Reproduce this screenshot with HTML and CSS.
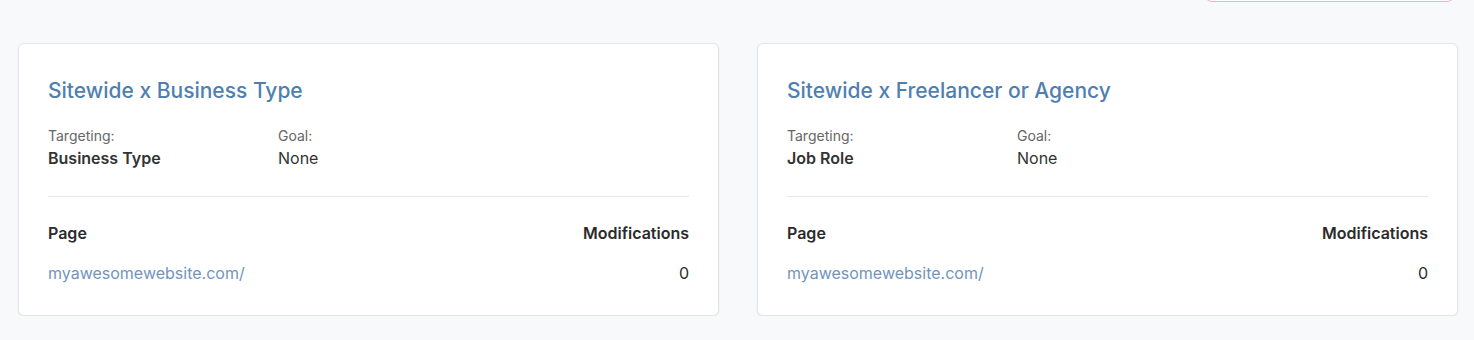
FILE: index.html
```html
<!DOCTYPE html>
<html lang="en">
<head>
  <meta charset="UTF-8" />
  <title>Experiments</title>
  <link rel="stylesheet" href="styles.css">
</head>
<body>

  <div class="top-bar">
    <div class="pink-btn"></div>
  </div>

  <div class="card-grid">
    <div class="card">
      <h2 class="card-title">Sitewide x Business Type</h2>
      <div class="meta-row">
        <div class="meta">
          <div class="meta-label">Targeting:</div>
          <div class="meta-value strong">Business Type</div>
        </div>
        <div class="meta">
          <div class="meta-label">Goal:</div>
          <div class="meta-value">None</div>
        </div>
      </div>
      <div class="pages">
        <div class="pages-row head">
          <span>Page</span>
          <span>Modifications</span>
        </div>
        <div class="pages-row">
          <a href="#" class="page-link">myawesomewebsite.com/</a>
          <span>0</span>
        </div>
      </div>
    </div>

    <div class="card">
      <h2 class="card-title">Sitewide x Freelancer or Agency</h2>
      <div class="meta-row">
        <div class="meta">
          <div class="meta-label">Targeting:</div>
          <div class="meta-value strong">Job Role</div>
        </div>
        <div class="meta">
          <div class="meta-label">Goal:</div>
          <div class="meta-value">None</div>
        </div>
      </div>
      <div class="pages">
        <div class="pages-row head">
          <span>Page</span>
          <span>Modifications</span>
        </div>
        <div class="pages-row">
          <a href="#" class="page-link">myawesomewebsite.com/</a>
          <span>0</span>
        </div>
      </div>
    </div>
  </div>

</body>
</html>
```

FILE: styles.css
```css
body {
  margin: 0;
  background: #f8f9fb;
  font-family: Inter, 'Liberation Sans', sans-serif;
  color: #2b2b2b;
}

.top-bar {
  display: flex;
  justify-content: flex-end;
  height: 3px;
  padding: 0 19px;
}

.pink-btn {
  width: 251px;
  height: 30px;
  margin-top: -28px;
  background: #fff;
  border: 1px solid #e7b3d6;
  border-radius: 8px;
  box-sizing: border-box;
}

.card-grid {
  display: grid;
  grid-template-columns: 1fr 1fr;
  gap: 38px;
  padding: 40px 16px 0 18px;
}

.card {
  background: #fff;
  border: 1px solid #e3e5ea;
  border-radius: 6px;
  box-shadow: 0 1px 2px rgba(0, 0, 0, 0.08);
  padding: 30px 29px 26px 29px;
  height: 273px;
  box-sizing: border-box;
}

.card-title {
  margin: 0 0 18px;
  font-size: 21px;
  font-weight: 500;
  color: #4f7fb0;
  line-height: 34px;
}

.meta-row {
  display: flex;
  padding-bottom: 26px;
  border-bottom: 1px solid #e5e7eb;
}

.meta {
  width: 230px;
}

.meta-label {
  font-size: 14px;
  color: #666;
  line-height: 20px;
}

.meta-value {
  font-size: 16px;
  line-height: 24px;
  color: #333;
}

.meta-value.strong {
  font-weight: 600;
}

.pages {
  padding-top: 24px;
}

.pages-row {
  display: flex;
  justify-content: space-between;
  font-size: 16px;
  line-height: 24px;
  margin-bottom: 16px;
}

.pages-row.head {
  font-weight: 600;
}

.page-link {
  color: #7194bd;
  text-decoration: none;
}
```
